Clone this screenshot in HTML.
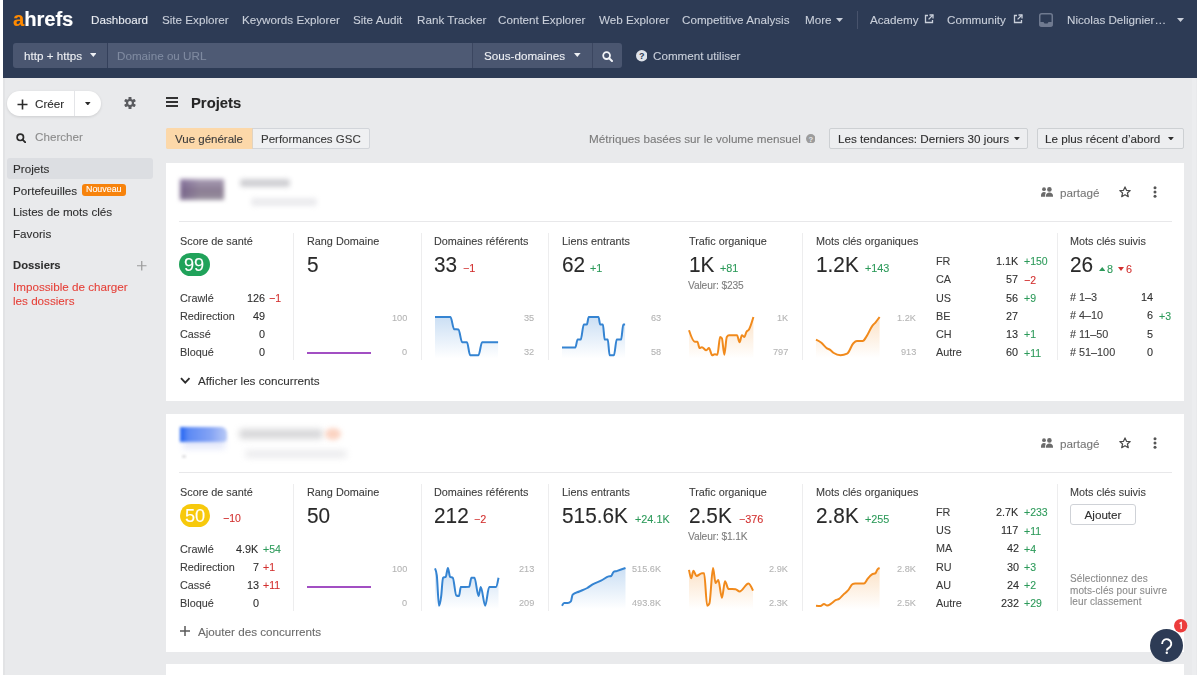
<!DOCTYPE html>
<html><head><meta charset="utf-8"><title>Ahrefs - Projets</title>
<style>
html,body{margin:0;padding:0;}
body{width:1200px;height:675px;overflow:hidden;position:relative;background:#ffffff;font-family:'Liberation Sans', sans-serif;}
.t{position:absolute;white-space:nowrap;will-change:transform;-webkit-text-stroke:0.1px currentColor;}
.r{position:absolute;display:block;}
</style></head><body>
<div class="r" style="left:3.00px;top:0.00px;width:1194.00px;height:675.00px;background:#e9eaec"></div>
<div class="r" style="left:3.00px;top:78.00px;width:2.20px;height:597.00px;background:#e2e3e5"></div>
<div class="r" style="left:1192.00px;top:78.00px;width:4.00px;height:597.00px;background:#ecedef"></div>
<div class="r" style="left:3.00px;top:0.00px;width:1194.00px;height:78.00px;background:#2d3b55"></div>
<div class="t" style="left:12.6px;top:8.81px;font-size:20.3px;line-height:20.3px;font-weight:700;letter-spacing:-0.1px;transform:scaleY(1.0);transform-origin:0 100%;"><span style="color:#ff8a00">a</span><span style="color:#ffffff">hrefs</span></div>
<div class="t" style="left:91.00px;top:14.12px;font-size:11.67px;line-height:11.67px;color:#e9ecf2;">Dashboard</div>
<div class="t" style="left:162.00px;top:14.12px;font-size:11.67px;line-height:11.67px;color:#c9cfda;">Site Explorer</div>
<div class="t" style="left:241.70px;top:14.12px;font-size:11.67px;line-height:11.67px;color:#c9cfda;">Keywords Explorer</div>
<div class="t" style="left:352.50px;top:14.12px;font-size:11.67px;line-height:11.67px;color:#c9cfda;">Site Audit</div>
<div class="t" style="left:416.70px;top:14.12px;font-size:11.67px;line-height:11.67px;color:#c9cfda;">Rank Tracker</div>
<div class="t" style="left:498.00px;top:14.12px;font-size:11.67px;line-height:11.67px;color:#c9cfda;">Content Explorer</div>
<div class="t" style="left:599.00px;top:14.12px;font-size:11.67px;line-height:11.67px;color:#c9cfda;">Web Explorer</div>
<div class="t" style="left:682.00px;top:14.12px;font-size:11.67px;line-height:11.67px;color:#c9cfda;">Competitive Analysis</div>
<div class="t" style="left:804.70px;top:14.12px;font-size:11.67px;line-height:11.67px;color:#c9cfda;">More</div>
<div class="t" style="left:870.00px;top:14.12px;font-size:11.67px;line-height:11.67px;color:#c9cfda;">Academy</div>
<div class="t" style="left:947.00px;top:14.12px;font-size:11.67px;line-height:11.67px;color:#c9cfda;">Community</div>
<div class="t" style="left:1066.70px;top:14.12px;font-size:11.67px;line-height:11.67px;color:#c9cfda;">Nicolas Delignier…</div>
<svg class="r" style="left:836.00px;top:18.00px;" width="7.00" height="4.00" viewBox="0 0 7.00 4.00"><path d="M0 0H7.00L3.50 4.00Z" fill="#c9cfda"/></svg>
<svg class="r" style="left:1176.70px;top:18.00px;" width="7.00" height="4.00" viewBox="0 0 7.00 4.00"><path d="M0 0H7.00L3.50 4.00Z" fill="#c9cfda"/></svg>
<div class="r" style="left:856.50px;top:11.00px;width:1.00px;height:18.00px;background:#48536c"></div>
<svg class="r" style="left:923.50px;top:13.50px;" width="10.00" height="10.00" viewBox="0 0 10.00 10.00"><path d="M4 1.5H1.5V8.5H8.5V6" fill="none" stroke="#c9cfda" stroke-width="1.3"/><path d="M5.5 1H9V4.5" fill="none" stroke="#c9cfda" stroke-width="1.3"/><path d="M9 1L4.6 5.4" stroke="#c9cfda" stroke-width="1.3"/></svg>
<svg class="r" style="left:1012.50px;top:13.50px;" width="10.00" height="10.00" viewBox="0 0 10.00 10.00"><path d="M4 1.5H1.5V8.5H8.5V6" fill="none" stroke="#c9cfda" stroke-width="1.3"/><path d="M5.5 1H9V4.5" fill="none" stroke="#c9cfda" stroke-width="1.3"/><path d="M9 1L4.6 5.4" stroke="#c9cfda" stroke-width="1.3"/></svg>
<svg class="r" style="left:1039.00px;top:13.00px;" width="14.00" height="14.00" viewBox="0 0 14.00 14.00"><rect x="0.75" y="0.75" width="12.5" height="12.5" rx="2" fill="none" stroke="#6f7a90" stroke-width="1.5"/><path d="M0.75 9H4.5L5.5 10.5H8.5L9.5 9H13.25V13.25H0.75Z" fill="#6f7a90"/></svg>
<div class="r" style="left:13.00px;top:43.00px;width:609.00px;height:25.00px;background:#4a5670;border-radius:3px"></div>
<div class="r" style="left:107.00px;top:43.00px;width:365.00px;height:25.00px;background:#4e5a74"></div>
<div class="r" style="left:106.60px;top:43.00px;width:1.60px;height:25.00px;background:#34405b"></div>
<div class="r" style="left:472.00px;top:43.00px;width:1.00px;height:25.00px;background:#3b4660"></div>
<div class="r" style="left:592.00px;top:43.00px;width:1.00px;height:25.00px;background:#3b4660"></div>
<div class="t" style="left:24.00px;top:50.12px;font-size:11.67px;line-height:11.67px;color:#eef0f4;">http + https</div>
<svg class="r" style="left:89.80px;top:53.30px;" width="6.60" height="4.00" viewBox="0 0 6.60 4.00"><path d="M0 0H6.60L3.30 4.00Z" fill="#eef0f4"/></svg>
<div class="t" style="left:117.00px;top:50.12px;font-size:11.67px;line-height:11.67px;color:#7f8aa0;">Domaine ou URL</div>
<div class="t" style="left:483.70px;top:50.12px;font-size:11.67px;line-height:11.67px;color:#eef0f4;">Sous-domaines</div>
<svg class="r" style="left:574.30px;top:53.30px;" width="6.60" height="4.00" viewBox="0 0 6.60 4.00"><path d="M0 0H6.60L3.30 4.00Z" fill="#eef0f4"/></svg>
<svg class="r" style="left:602.00px;top:50.50px;" width="11.00" height="11.00" viewBox="0 0 11.00 11.00"><circle cx="4.6" cy="4.6" r="3.4" fill="none" stroke="#f2f4f7" stroke-width="1.8"/><path d="M7.2 7.2L10 10" stroke="#f2f4f7" stroke-width="2" stroke-linecap="round"/></svg>
<svg class="r" style="left:635.50px;top:50.00px;" width="11.50" height="11.50" viewBox="0 0 11.50 11.50"><circle cx="5.75" cy="5.75" r="5.75" fill="#dfe3ea"/><text x="5.75" y="9.2" text-anchor="middle" font-family="Liberation Sans" font-weight="700" font-size="9" fill="#2d3b55">?</text></svg>
<div class="t" style="left:652.50px;top:50.12px;font-size:11.67px;line-height:11.67px;color:#c9cfda;">Comment utiliser</div>
<div class="r" style="left:6.70px;top:91.00px;width:94.00px;height:25.30px;background:#ffffff;border-radius:13px;box-shadow:0 1px 3px rgba(0,0,0,0.12)"></div>
<div class="r" style="left:73.50px;top:91.00px;width:1.00px;height:25.30px;background:#e4e5e8"></div>
<svg class="r" style="left:16.50px;top:99.00px;" width="11.00" height="11.00" viewBox="0 0 11.00 11.00"><path d="M5.5 0.5V10.5M0.5 5.5H10.5" stroke="#2b2b2b" stroke-width="1.6"/></svg>
<div class="t" style="left:35.00px;top:98.12px;font-size:11.67px;line-height:11.67px;color:#2b2b2b;">Créer</div>
<svg class="r" style="left:85.20px;top:101.80px;" width="5.60" height="3.60" viewBox="0 0 5.60 3.60"><path d="M0 0H5.60L2.80 3.60Z" fill="#2b2b2b"/></svg>
<svg class="r" style="left:123.50px;top:96.80px;" width="12.00" height="12.00" viewBox="0 0 12.00 12.00"><g fill="#5b5c60"><circle cx="6" cy="6" r="4.0"/><rect x="4.5" y="0" width="3" height="3.2" rx="0.6" transform="rotate(0 6 6)"/><rect x="4.5" y="0" width="3" height="3.2" rx="0.6" transform="rotate(60 6 6)"/><rect x="4.5" y="0" width="3" height="3.2" rx="0.6" transform="rotate(120 6 6)"/><rect x="4.5" y="0" width="3" height="3.2" rx="0.6" transform="rotate(180 6 6)"/><rect x="4.5" y="0" width="3" height="3.2" rx="0.6" transform="rotate(240 6 6)"/><rect x="4.5" y="0" width="3" height="3.2" rx="0.6" transform="rotate(300 6 6)"/></g><circle cx="6" cy="6" r="1.9" fill="#e9eaec"/></svg>
<svg class="r" style="left:15.50px;top:132.80px;" width="10.50" height="10.00" viewBox="0 0 10.50 10.00"><circle cx="4.3" cy="4.3" r="3.2" fill="none" stroke="#2b2b2b" stroke-width="1.7"/><path d="M6.8 6.8L9.5 9.5" stroke="#2b2b2b" stroke-width="1.9" stroke-linecap="round"/></svg>
<div class="t" style="left:35.00px;top:131.12px;font-size:11.67px;line-height:11.67px;color:#8a8a8a;">Chercher</div>
<div class="r" style="left:7.00px;top:158.30px;width:145.50px;height:20.70px;background:#dcdee2;border-radius:3px"></div>
<div class="t" style="left:12.90px;top:163.32px;font-size:11.67px;line-height:11.67px;color:#2e2e2e;">Projets</div>
<div class="t" style="left:12.90px;top:184.62px;font-size:11.67px;line-height:11.67px;color:#2e2e2e;">Portefeuilles</div>
<div class="r" style="left:82.00px;top:184.10px;width:43.70px;height:11.70px;background:#f7830c;border-radius:3px"></div>
<div class="t" style="left:85.80px;top:185.36px;font-size:8.90px;line-height:8.90px;color:#ffffff;">Nouveau</div>
<div class="t" style="left:12.90px;top:206.02px;font-size:11.67px;line-height:11.67px;color:#2e2e2e;">Listes de mots clés</div>
<div class="t" style="left:12.90px;top:227.82px;font-size:11.67px;line-height:11.67px;color:#2e2e2e;">Favoris</div>
<div class="t" style="left:12.90px;top:259.66px;font-size:11.27px;line-height:11.27px;color:#2e2e2e;font-weight:700;">Dossiers</div>
<svg class="r" style="left:137.00px;top:261.00px;" width="9.50" height="9.50" viewBox="0 0 9.50 9.50"><path d="M4.75 0V9.5M0 4.75H9.5" stroke="#9a9a9a" stroke-width="1.2"/></svg>
<div class="t" style="left:12.90px;top:281.12px;font-size:11.67px;line-height:11.67px;color:#e5423a;">Impossible de charger</div>
<div class="t" style="left:12.90px;top:295.12px;font-size:11.67px;line-height:11.67px;color:#e5423a;">les dossiers</div>
<svg class="r" style="left:166.00px;top:97.00px;" width="12.00" height="10.00" viewBox="0 0 12.00 10.00"><path d="M0 1H12M0 5H12M0 9H12" stroke="#333" stroke-width="1.8"/></svg>
<div class="t" style="left:191.00px;top:95.67px;font-size:14.80px;line-height:14.80px;color:#262626;font-weight:700;">Projets</div>
<div class="r" style="left:166.00px;top:128.10px;width:203.50px;height:21.40px;background:#eff0f2;border:1px solid #d2d5da;border-radius:2px;box-sizing:border-box"></div>
<div class="r" style="left:166.00px;top:128.10px;width:86.00px;height:21.40px;background:#fcd8a9;border-radius:2px 0 0 2px"></div>
<div class="r" style="left:251.70px;top:128.10px;width:1.00px;height:21.40px;background:#e0d3c2"></div>
<div class="t" style="left:175.20px;top:133.96px;font-size:11.50px;line-height:11.50px;color:#3a3a3a;">Vue générale</div>
<div class="t" style="left:260.50px;top:133.96px;font-size:11.50px;line-height:11.50px;color:#3a3a3a;">Performances GSC</div>
<div class="t" style="left:588.75px;top:133.12px;font-size:11.67px;line-height:11.67px;color:#7a7a7a;">Métriques basées sur le volume mensuel</div>
<svg class="r" style="left:805.50px;top:133.50px;" width="9.60" height="9.60" viewBox="0 0 9.60 9.60"><circle cx="4.8" cy="4.8" r="4.8" fill="#9c9c9c"/><text x="4.8" y="7.8" text-anchor="middle" font-family="Liberation Sans" font-weight="700" font-size="7.6" fill="#e9eaec">?</text></svg>
<div class="r" style="left:828.70px;top:128.20px;width:199.80px;height:21.00px;background:#edeef0;border:1px solid #cdd0d3;border-radius:2px;box-sizing:border-box"></div>
<div class="t" style="left:838.00px;top:133.12px;font-size:11.67px;line-height:11.67px;color:#2e2e2e;">Les tendances: Derniers 30 jours</div>
<svg class="r" style="left:1013.90px;top:136.70px;" width="5.80" height="3.60" viewBox="0 0 5.80 3.60"><path d="M0 0H5.80L2.90 3.60Z" fill="#2e2e2e"/></svg>
<div class="r" style="left:1036.50px;top:128.20px;width:147.00px;height:21.00px;background:#edeef0;border:1px solid #cdd0d3;border-radius:2px;box-sizing:border-box"></div>
<div class="t" style="left:1045.30px;top:133.12px;font-size:11.67px;line-height:11.67px;color:#2e2e2e;">Le plus récent d’abord</div>
<svg class="r" style="left:1167.80px;top:136.70px;" width="5.80" height="3.60" viewBox="0 0 5.80 3.60"><path d="M0 0H5.80L2.90 3.60Z" fill="#2e2e2e"/></svg>
<div class="r" style="left:166.00px;top:163.00px;width:1017.50px;height:237.50px;background:#ffffff"></div>
<div class="r" style="left:179.50px;top:179.00px;width:44.00px;height:21.00px;background:linear-gradient(90deg,rgba(80,50,120,0.35),rgba(80,50,120,0) 45%),linear-gradient(180deg,#a99db5 0%,#8b7d93 55%,#9a92a0 100%);filter:blur(2px)"></div>
<div class="r" style="left:240.00px;top:178.50px;width:50.00px;height:8.00px;background:#cfcfd3;border-radius:3px;filter:blur(2.6px)"></div>
<div class="r" style="left:251.00px;top:198.00px;width:66.00px;height:7.50px;background:#ebebee;border-radius:3px;filter:blur(2.6px)"></div>
<svg class="r" style="left:1041.00px;top:187.30px;" width="12.50" height="10.00" viewBox="0 0 12.50 10.00"><g fill="#6b6b6b"><circle cx="3" cy="2.2" r="1.9"/><circle cx="8.4" cy="2.4" r="2.3"/><path d="M0 8.5C0 6.2 1.2 5 3 5C3.9 5 4.5 5.3 4.9 5.8C4.3 6.6 4.1 7.6 4.1 8.6V9.8H0Z"/><path d="M4.9 9.8V8.8C4.9 6.7 6.3 5.4 8.4 5.4C10.6 5.4 12 6.7 12 8.8V9.8Z"/></g></svg>
<div class="t" style="left:1059.60px;top:186.72px;font-size:11.67px;line-height:11.67px;color:#777777;">partagé</div>
<svg class="r" style="left:1118.50px;top:186.20px;" width="12.00" height="12.00" viewBox="0 0 12.00 12.00"><path d="M6 0.9L7.5 4.3L11.2 4.6L8.4 7L9.3 10.7L6 8.7L2.7 10.7L3.6 7L0.8 4.6L4.5 4.3Z" fill="none" stroke="#4a4a4a" stroke-width="1.2" stroke-linejoin="round"/></svg>
<svg class="r" style="left:1153.30px;top:186.30px;" width="4.00" height="12.00" viewBox="0 0 4.00 12.00"><g fill="#555"><circle cx="2" cy="1.7" r="1.5"/><circle cx="2" cy="6" r="1.5"/><circle cx="2" cy="10.3" r="1.5"/></g></svg>
<div class="r" style="left:178.70px;top:221.00px;width:993.30px;height:1.00px;background:#e8e8ea"></div>
<div class="r" style="left:293.40px;top:233.00px;width:1.00px;height:126.50px;background:#ededee"></div>
<div class="r" style="left:421.00px;top:233.00px;width:1.00px;height:126.50px;background:#ededee"></div>
<div class="r" style="left:547.60px;top:233.00px;width:1.00px;height:126.50px;background:#ededee"></div>
<div class="r" style="left:802.00px;top:233.00px;width:1.00px;height:126.50px;background:#ededee"></div>
<div class="r" style="left:1056.50px;top:233.00px;width:1.00px;height:126.50px;background:#ededee"></div>
<div class="t" style="left:179.50px;top:235.93px;font-size:10.83px;line-height:10.83px;color:#3c3c3c;">Score de santé</div>
<div class="r" style="left:179.30px;top:253.00px;width:31.00px;height:22.80px;background:#20a25a;border-radius:11.4px"></div>
<div class="t" style="left:193.90px;transform:translateX(-50%);top:255.69px;font-size:18.20px;line-height:18.20px;color:#ffffff;">99</div>
<div class="t" style="left:179.50px;top:292.83px;font-size:10.83px;line-height:10.83px;color:#3c3c3c;">Crawlé</div>
<div class="t" style="right:935.20px;top:292.83px;font-size:10.83px;line-height:10.83px;color:#2e2e2e;">126</div>
<div class="t" style="left:268.80px;top:293.11px;font-size:10.50px;line-height:10.50px;color:#d2302f;">−1</div>
<div class="t" style="left:179.50px;top:310.98px;font-size:10.83px;line-height:10.83px;color:#3c3c3c;">Redirection</div>
<div class="t" style="right:935.20px;top:310.98px;font-size:10.83px;line-height:10.83px;color:#2e2e2e;">49</div>
<div class="t" style="left:179.50px;top:329.13px;font-size:10.83px;line-height:10.83px;color:#3c3c3c;">Cassé</div>
<div class="t" style="right:935.20px;top:329.13px;font-size:10.83px;line-height:10.83px;color:#2e2e2e;">0</div>
<div class="t" style="left:179.50px;top:347.28px;font-size:10.83px;line-height:10.83px;color:#3c3c3c;">Bloqué</div>
<div class="t" style="right:935.20px;top:347.28px;font-size:10.83px;line-height:10.83px;color:#2e2e2e;">0</div>
<div class="t" style="left:306.70px;top:235.93px;font-size:10.83px;line-height:10.83px;color:#3c3c3c;">Rang Domaine</div>
<div class="t" style="left:306.70px;top:254.99px;font-size:20.80px;line-height:20.80px;color:#2a2a2a;transform:scaleY(1.06);transform-origin:0 85%">5</div>
<div class="r" style="left:307.10px;top:352.00px;width:64.10px;height:2.00px;background:#a24fc3"></div>
<div class="t" style="right:793.10px;top:313.74px;font-size:9.17px;line-height:9.17px;color:#b4b4b4;">100</div>
<div class="t" style="right:793.10px;top:348.04px;font-size:9.17px;line-height:9.17px;color:#b4b4b4;">0</div>
<div class="t" style="left:434.00px;top:235.93px;font-size:10.83px;line-height:10.83px;color:#3c3c3c;">Domaines référents</div>
<div class="t" style="left:434.00px;top:254.99px;font-size:20.80px;line-height:20.80px;color:#2a2a2a;transform:scaleY(1.06);transform-origin:0 85%">33</div>
<div class="t" style="left:463.30px;top:263.23px;font-size:10.83px;line-height:10.83px;color:#d2302f;">−1</div>
<svg class="r" style="left:432.90px;top:314.60px;" width="67.10" height="43.40" viewBox="0 0 67.10 43.40"><defs><linearGradient id="g104" x1="0" y1="0" x2="0" y2="1"><stop offset="0" stop-color="rgb(47,127,211)" stop-opacity="0.25"/><stop offset="1" stop-color="rgb(47,127,211)" stop-opacity="0"/></linearGradient></defs><path d="M2.00 2.00 C7.17 2.00 12.33 2.00 17.50 2.00 C18.70 2.00 19.90 14.09 21.10 14.20 C22.57 14.33 24.03 14.27 25.50 14.40 C26.70 14.51 27.90 27.30 29.10 27.30 C30.73 27.30 32.37 27.30 34.00 27.30 C35.03 27.30 36.07 40.20 37.10 40.20 C39.90 40.20 42.70 40.20 45.50 40.20 C46.70 40.20 47.90 27.30 49.10 27.30 C54.43 27.30 59.77 27.30 65.10 27.30 L65.10 43.40 L2.00 43.40 Z" fill="url(#g104)"/><path d="M2.00 2.00 C7.17 2.00 12.33 2.00 17.50 2.00 C18.70 2.00 19.90 14.09 21.10 14.20 C22.57 14.33 24.03 14.27 25.50 14.40 C26.70 14.51 27.90 27.30 29.10 27.30 C30.73 27.30 32.37 27.30 34.00 27.30 C35.03 27.30 36.07 40.20 37.10 40.20 C39.90 40.20 42.70 40.20 45.50 40.20 C46.70 40.20 47.90 27.30 49.10 27.30 C54.43 27.30 59.77 27.30 65.10 27.30" fill="none" stroke="#3584d2" stroke-width="2.00" stroke-linejoin="round" stroke-linecap="butt"/></svg>
<div class="t" style="right:666.10px;top:313.74px;font-size:9.17px;line-height:9.17px;color:#b4b4b4;">35</div>
<div class="t" style="right:666.10px;top:348.04px;font-size:9.17px;line-height:9.17px;color:#b4b4b4;">32</div>
<div class="t" style="left:561.50px;top:235.93px;font-size:10.83px;line-height:10.83px;color:#3c3c3c;">Liens entrants</div>
<div class="t" style="left:561.50px;top:254.99px;font-size:20.80px;line-height:20.80px;color:#2a2a2a;transform:scaleY(1.06);transform-origin:0 85%">62</div>
<div class="t" style="left:590.30px;top:263.23px;font-size:10.83px;line-height:10.83px;color:#2d9a5a;">+1</div>
<svg class="r" style="left:560.10px;top:314.60px;" width="67.10" height="43.40" viewBox="0 0 67.10 43.40"><defs><linearGradient id="g110" x1="0" y1="0" x2="0" y2="1"><stop offset="0" stop-color="rgb(47,127,211)" stop-opacity="0.25"/><stop offset="1" stop-color="rgb(47,127,211)" stop-opacity="0"/></linearGradient></defs><path d="M2.00 32.60 C6.43 32.60 10.87 32.60 15.30 32.60 C16.07 32.60 16.83 24.60 17.60 24.60 C18.63 24.60 19.67 24.60 20.70 24.60 C21.73 24.60 22.77 9.50 23.80 9.50 C24.83 9.50 25.87 9.50 26.90 9.50 C27.50 9.50 28.10 2.00 28.70 2.00 C31.97 2.00 35.23 2.00 38.50 2.00 C39.07 2.00 39.63 9.50 40.20 9.50 C41.10 9.50 42.00 9.50 42.90 9.50 C43.50 9.50 44.10 24.60 44.70 24.60 C45.73 24.60 46.77 24.60 47.80 24.60 C48.40 24.60 49.00 40.20 49.60 40.20 C51.07 40.20 52.53 40.20 54.00 40.20 C54.90 40.20 55.80 24.60 56.70 24.60 C58.17 24.60 59.63 24.60 61.10 24.60 C61.83 24.60 62.57 9.50 63.30 9.50 C63.90 9.50 64.50 9.50 65.10 9.50 L65.10 43.40 L2.00 43.40 Z" fill="url(#g110)"/><path d="M2.00 32.60 C6.43 32.60 10.87 32.60 15.30 32.60 C16.07 32.60 16.83 24.60 17.60 24.60 C18.63 24.60 19.67 24.60 20.70 24.60 C21.73 24.60 22.77 9.50 23.80 9.50 C24.83 9.50 25.87 9.50 26.90 9.50 C27.50 9.50 28.10 2.00 28.70 2.00 C31.97 2.00 35.23 2.00 38.50 2.00 C39.07 2.00 39.63 9.50 40.20 9.50 C41.10 9.50 42.00 9.50 42.90 9.50 C43.50 9.50 44.10 24.60 44.70 24.60 C45.73 24.60 46.77 24.60 47.80 24.60 C48.40 24.60 49.00 40.20 49.60 40.20 C51.07 40.20 52.53 40.20 54.00 40.20 C54.90 40.20 55.80 24.60 56.70 24.60 C58.17 24.60 59.63 24.60 61.10 24.60 C61.83 24.60 62.57 9.50 63.30 9.50 C63.90 9.50 64.50 9.50 65.10 9.50" fill="none" stroke="#3584d2" stroke-width="2.00" stroke-linejoin="round" stroke-linecap="butt"/></svg>
<div class="t" style="right:539.00px;top:313.74px;font-size:9.17px;line-height:9.17px;color:#b4b4b4;">63</div>
<div class="t" style="right:539.00px;top:348.04px;font-size:9.17px;line-height:9.17px;color:#b4b4b4;">58</div>
<div class="t" style="left:688.70px;top:235.93px;font-size:10.83px;line-height:10.83px;color:#3c3c3c;">Trafic organique</div>
<div class="t" style="left:688.70px;top:254.99px;font-size:20.80px;line-height:20.80px;color:#2a2a2a;transform:scaleY(1.06);transform-origin:0 85%">1K</div>
<div class="t" style="left:719.80px;top:263.23px;font-size:10.83px;line-height:10.83px;color:#2d9a5a;">+81</div>
<div class="t" style="left:688.30px;top:281.16px;font-size:10.20px;line-height:10.20px;color:#7d7d7d;letter-spacing:-0.12px">Valeur: $235</div>
<svg class="r" style="left:686.80px;top:314.60px;" width="68.40" height="43.40" viewBox="0 0 68.40 43.40"><defs><linearGradient id="g117" x1="0" y1="0" x2="0" y2="1"><stop offset="0" stop-color="rgb(241,138,28)" stop-opacity="0.25"/><stop offset="1" stop-color="rgb(241,138,28)" stop-opacity="0"/></linearGradient></defs><path d="M2.00 15.30 C3.93 21.05 5.87 26.80 7.80 26.80 C8.67 26.80 9.53 26.80 10.40 26.80 C11.13 26.80 11.87 33.10 12.60 33.10 C13.37 33.10 14.13 32.20 14.90 32.20 C16.37 32.20 17.83 35.30 19.30 35.30 C20.20 35.30 21.10 33.10 22.00 33.10 C23.03 33.10 24.07 40.20 25.10 40.20 C26.00 40.20 26.90 39.30 27.80 39.30 C28.67 39.30 29.53 39.70 30.40 39.70 C31.30 39.70 32.20 22.00 33.10 22.00 C33.70 22.00 34.30 22.43 34.90 23.30 C35.70 24.46 36.50 39.70 37.30 39.70 C38.13 39.70 38.97 23.36 39.80 22.00 C40.53 20.80 41.27 20.20 42.00 20.20 C44.67 20.20 47.33 20.20 50.00 20.20 C50.87 20.20 51.73 27.30 52.60 27.30 C53.37 27.30 54.13 20.20 54.90 20.20 C55.77 20.20 56.63 22.00 57.50 22.00 C58.10 22.00 58.70 18.30 59.30 17.10 C60.20 15.30 61.10 15.92 62.00 14.40 C63.47 11.92 64.93 6.96 66.40 2.00 L66.40 43.40 L2.00 43.40 Z" fill="url(#g117)"/><path d="M2.00 15.30 C3.93 21.05 5.87 26.80 7.80 26.80 C8.67 26.80 9.53 26.80 10.40 26.80 C11.13 26.80 11.87 33.10 12.60 33.10 C13.37 33.10 14.13 32.20 14.90 32.20 C16.37 32.20 17.83 35.30 19.30 35.30 C20.20 35.30 21.10 33.10 22.00 33.10 C23.03 33.10 24.07 40.20 25.10 40.20 C26.00 40.20 26.90 39.30 27.80 39.30 C28.67 39.30 29.53 39.70 30.40 39.70 C31.30 39.70 32.20 22.00 33.10 22.00 C33.70 22.00 34.30 22.43 34.90 23.30 C35.70 24.46 36.50 39.70 37.30 39.70 C38.13 39.70 38.97 23.36 39.80 22.00 C40.53 20.80 41.27 20.20 42.00 20.20 C44.67 20.20 47.33 20.20 50.00 20.20 C50.87 20.20 51.73 27.30 52.60 27.30 C53.37 27.30 54.13 20.20 54.90 20.20 C55.77 20.20 56.63 22.00 57.50 22.00 C58.10 22.00 58.70 18.30 59.30 17.10 C60.20 15.30 61.10 15.92 62.00 14.40 C63.47 11.92 64.93 6.96 66.40 2.00" fill="none" stroke="#f18a1c" stroke-width="2.00" stroke-linejoin="round" stroke-linecap="butt"/></svg>
<div class="t" style="right:412.00px;top:313.74px;font-size:9.17px;line-height:9.17px;color:#b4b4b4;">1K</div>
<div class="t" style="right:412.00px;top:348.04px;font-size:9.17px;line-height:9.17px;color:#b4b4b4;">797</div>
<div class="t" style="left:816.00px;top:235.93px;font-size:10.83px;line-height:10.83px;color:#3c3c3c;">Mots clés organiques</div>
<div class="t" style="left:816.00px;top:254.99px;font-size:20.80px;line-height:20.80px;color:#2a2a2a;transform:scaleY(1.06);transform-origin:0 85%">1.2K</div>
<div class="t" style="left:865.00px;top:263.23px;font-size:10.83px;line-height:10.83px;color:#2d9a5a;">+143</div>
<svg class="r" style="left:814.20px;top:315.00px;" width="67.60" height="43.00" viewBox="0 0 67.60 43.00"><defs><linearGradient id="g123" x1="0" y1="0" x2="0" y2="1"><stop offset="0" stop-color="rgb(241,138,28)" stop-opacity="0.25"/><stop offset="1" stop-color="rgb(241,138,28)" stop-opacity="0"/></linearGradient></defs><path d="M2.00 24.70 C3.80 25.54 5.60 26.38 7.40 27.80 C9.17 29.19 10.93 31.85 12.70 33.10 C13.87 33.93 15.03 34.10 16.20 34.90 C17.40 35.72 18.60 37.21 19.80 38.00 C22.03 39.47 24.27 40.20 26.50 40.20 C28.70 40.20 30.90 39.70 33.10 38.70 C35.20 37.75 37.30 30.30 39.40 28.20 C40.57 27.03 41.73 26.00 42.90 26.00 C44.83 26.00 46.77 26.00 48.70 26.00 C50.03 26.00 51.37 23.09 52.70 21.10 C54.47 18.46 56.23 13.79 58.00 11.30 C59.20 9.61 60.40 8.75 61.60 7.30 C62.93 5.68 64.27 3.84 65.60 2.00 L65.60 43.00 L2.00 43.00 Z" fill="url(#g123)"/><path d="M2.00 24.70 C3.80 25.54 5.60 26.38 7.40 27.80 C9.17 29.19 10.93 31.85 12.70 33.10 C13.87 33.93 15.03 34.10 16.20 34.90 C17.40 35.72 18.60 37.21 19.80 38.00 C22.03 39.47 24.27 40.20 26.50 40.20 C28.70 40.20 30.90 39.70 33.10 38.70 C35.20 37.75 37.30 30.30 39.40 28.20 C40.57 27.03 41.73 26.00 42.90 26.00 C44.83 26.00 46.77 26.00 48.70 26.00 C50.03 26.00 51.37 23.09 52.70 21.10 C54.47 18.46 56.23 13.79 58.00 11.30 C59.20 9.61 60.40 8.75 61.60 7.30 C62.93 5.68 64.27 3.84 65.60 2.00" fill="none" stroke="#f18a1c" stroke-width="2.00" stroke-linejoin="round" stroke-linecap="butt"/></svg>
<div class="t" style="right:284.10px;top:313.74px;font-size:9.17px;line-height:9.17px;color:#b4b4b4;">1.2K</div>
<div class="t" style="right:284.10px;top:348.04px;font-size:9.17px;line-height:9.17px;color:#b4b4b4;">913</div>
<div class="t" style="left:936.00px;top:256.03px;font-size:10.83px;line-height:10.83px;color:#3c3c3c;">FR</div>
<div class="t" style="right:181.60px;top:256.03px;font-size:10.83px;line-height:10.83px;color:#2e2e2e;">1.1K</div>
<div class="t" style="left:1023.90px;top:256.31px;font-size:10.50px;line-height:10.50px;color:#2d9a5a;">+150</div>
<div class="t" style="left:936.00px;top:274.31px;font-size:10.83px;line-height:10.83px;color:#3c3c3c;">CA</div>
<div class="t" style="right:181.60px;top:274.31px;font-size:10.83px;line-height:10.83px;color:#2e2e2e;">57</div>
<div class="t" style="left:1023.90px;top:274.59px;font-size:10.50px;line-height:10.50px;color:#d2302f;">−2</div>
<div class="t" style="left:936.00px;top:292.59px;font-size:10.83px;line-height:10.83px;color:#3c3c3c;">US</div>
<div class="t" style="right:181.60px;top:292.59px;font-size:10.83px;line-height:10.83px;color:#2e2e2e;">56</div>
<div class="t" style="left:1023.90px;top:292.87px;font-size:10.50px;line-height:10.50px;color:#2d9a5a;">+9</div>
<div class="t" style="left:936.00px;top:310.87px;font-size:10.83px;line-height:10.83px;color:#3c3c3c;">BE</div>
<div class="t" style="right:181.60px;top:310.87px;font-size:10.83px;line-height:10.83px;color:#2e2e2e;">27</div>
<div class="t" style="left:936.00px;top:329.15px;font-size:10.83px;line-height:10.83px;color:#3c3c3c;">CH</div>
<div class="t" style="right:181.60px;top:329.15px;font-size:10.83px;line-height:10.83px;color:#2e2e2e;">13</div>
<div class="t" style="left:1023.90px;top:329.43px;font-size:10.50px;line-height:10.50px;color:#2d9a5a;">+1</div>
<div class="t" style="left:936.00px;top:347.43px;font-size:10.83px;line-height:10.83px;color:#3c3c3c;">Autre</div>
<div class="t" style="right:181.60px;top:347.43px;font-size:10.83px;line-height:10.83px;color:#2e2e2e;">60</div>
<div class="t" style="left:1023.90px;top:347.71px;font-size:10.50px;line-height:10.50px;color:#2d9a5a;">+11</div>
<div class="t" style="left:1070.00px;top:235.93px;font-size:10.83px;line-height:10.83px;color:#3c3c3c;">Mots clés suivis</div>
<div class="t" style="left:1070.00px;top:254.99px;font-size:20.80px;line-height:20.80px;color:#2a2a2a;transform:scaleY(1.06);transform-origin:0 85%">26</div>
<svg class="r" style="left:1098.90px;top:266.60px;" width="6.50" height="4.00" viewBox="0 0 6.50 4.00"><path d="M0 4H6.5L3.25 0Z" fill="#2d9a5a"/></svg>
<div class="t" style="left:1106.50px;top:263.83px;font-size:10.83px;line-height:10.83px;color:#2d9a5a;">8</div>
<svg class="r" style="left:1118.40px;top:266.80px;" width="6.00" height="4.00" viewBox="0 0 6.00 4.00"><path d="M0 0H6L3 4Z" fill="#d2302f"/></svg>
<div class="t" style="left:1125.80px;top:263.83px;font-size:10.83px;line-height:10.83px;color:#d2302f;">6</div>
<div class="t" style="left:1070.00px;top:292.23px;font-size:10.83px;line-height:10.83px;color:#3c3c3c;"># 1–3</div>
<div class="t" style="right:46.90px;top:292.23px;font-size:10.83px;line-height:10.83px;color:#2e2e2e;">14</div>
<div class="t" style="left:1070.00px;top:310.46px;font-size:10.83px;line-height:10.83px;color:#3c3c3c;"># 4–10</div>
<div class="t" style="right:46.90px;top:310.46px;font-size:10.83px;line-height:10.83px;color:#2e2e2e;">6</div>
<div class="t" style="left:1158.80px;top:310.74px;font-size:10.50px;line-height:10.50px;color:#2d9a5a;">+3</div>
<div class="t" style="left:1070.00px;top:328.69px;font-size:10.83px;line-height:10.83px;color:#3c3c3c;"># 11–50</div>
<div class="t" style="right:46.90px;top:328.69px;font-size:10.83px;line-height:10.83px;color:#2e2e2e;">5</div>
<div class="t" style="left:1070.00px;top:346.92px;font-size:10.83px;line-height:10.83px;color:#3c3c3c;"># 51–100</div>
<div class="t" style="right:46.90px;top:346.92px;font-size:10.83px;line-height:10.83px;color:#2e2e2e;">0</div>
<svg class="r" style="left:180.00px;top:376.50px;" width="10.50" height="7.50" viewBox="0 0 10.50 7.50"><path d="M1 1.2L5.25 5.6L9.5 1.2" fill="none" stroke="#2b2b2b" stroke-width="1.8"/></svg>
<div class="t" style="left:197.80px;top:374.52px;font-size:11.67px;line-height:11.67px;color:#333333;">Afficher les concurrents</div>
<div class="r" style="left:166.00px;top:414.00px;width:1017.50px;height:237.50px;background:#ffffff"></div>
<div class="r" style="left:183.00px;top:436.00px;width:42.00px;height:13.00px;background:#e6eafb;filter:blur(3px)"></div>
<div class="r" style="left:179.50px;top:427.00px;width:47.00px;height:14.50px;background:linear-gradient(90deg,#1f62f2 0%,#5d8af4 18%,#84a3f4 65%,#b8c9f6 100%);border-radius:0 6px 4px 0;filter:blur(1.6px)"></div>
<div class="r" style="left:182.00px;top:455.00px;width:4.00px;height:3.00px;background:#e2e2e4;filter:blur(1px)"></div>
<div class="r" style="left:238.50px;top:429.00px;width:84.00px;height:10.00px;background:#d8d8da;border-radius:4px;filter:blur(3px)"></div>
<div class="r" style="left:325.00px;top:428.00px;width:16.00px;height:12.00px;background:#fbd3c2;border-radius:50%;filter:blur(2.8px)"></div>
<div class="r" style="left:245.00px;top:449.50px;width:102.00px;height:8.50px;background:#ececee;border-radius:4px;filter:blur(3px)"></div>
<svg class="r" style="left:1041.00px;top:438.30px;" width="12.50" height="10.00" viewBox="0 0 12.50 10.00"><g fill="#6b6b6b"><circle cx="3" cy="2.2" r="1.9"/><circle cx="8.4" cy="2.4" r="2.3"/><path d="M0 8.5C0 6.2 1.2 5 3 5C3.9 5 4.5 5.3 4.9 5.8C4.3 6.6 4.1 7.6 4.1 8.6V9.8H0Z"/><path d="M4.9 9.8V8.8C4.9 6.7 6.3 5.4 8.4 5.4C10.6 5.4 12 6.7 12 8.8V9.8Z"/></g></svg>
<div class="t" style="left:1059.60px;top:437.72px;font-size:11.67px;line-height:11.67px;color:#777777;">partagé</div>
<svg class="r" style="left:1118.50px;top:437.20px;" width="12.00" height="12.00" viewBox="0 0 12.00 12.00"><path d="M6 0.9L7.5 4.3L11.2 4.6L8.4 7L9.3 10.7L6 8.7L2.7 10.7L3.6 7L0.8 4.6L4.5 4.3Z" fill="none" stroke="#4a4a4a" stroke-width="1.2" stroke-linejoin="round"/></svg>
<svg class="r" style="left:1153.30px;top:437.30px;" width="4.00" height="12.00" viewBox="0 0 4.00 12.00"><g fill="#555"><circle cx="2" cy="1.7" r="1.5"/><circle cx="2" cy="6" r="1.5"/><circle cx="2" cy="10.3" r="1.5"/></g></svg>
<div class="r" style="left:178.70px;top:472.00px;width:993.30px;height:1.00px;background:#e8e8ea"></div>
<div class="r" style="left:293.40px;top:484.00px;width:1.00px;height:126.50px;background:#ededee"></div>
<div class="r" style="left:421.00px;top:484.00px;width:1.00px;height:126.50px;background:#ededee"></div>
<div class="r" style="left:547.60px;top:484.00px;width:1.00px;height:126.50px;background:#ededee"></div>
<div class="r" style="left:802.00px;top:484.00px;width:1.00px;height:126.50px;background:#ededee"></div>
<div class="r" style="left:1056.50px;top:484.00px;width:1.00px;height:126.50px;background:#ededee"></div>
<div class="t" style="left:179.50px;top:486.93px;font-size:10.83px;line-height:10.83px;color:#3c3c3c;">Score de santé</div>
<div class="r" style="left:179.70px;top:504.10px;width:30.40px;height:22.70px;background:#f7c90c;border-radius:11.4px"></div>
<div class="t" style="left:194.60px;transform:translateX(-50%);top:506.99px;font-size:18.20px;line-height:18.20px;color:#ffffff;">50</div>
<div class="t" style="left:223.40px;top:513.01px;font-size:10.50px;line-height:10.50px;color:#d2302f;">−10</div>
<div class="t" style="left:179.50px;top:543.83px;font-size:10.83px;line-height:10.83px;color:#3c3c3c;">Crawlé</div>
<div class="t" style="right:941.30px;top:543.83px;font-size:10.83px;line-height:10.83px;color:#2e2e2e;">4.9K</div>
<div class="t" style="left:262.70px;top:544.11px;font-size:10.50px;line-height:10.50px;color:#2d9a5a;">+54</div>
<div class="t" style="left:179.50px;top:561.98px;font-size:10.83px;line-height:10.83px;color:#3c3c3c;">Redirection</div>
<div class="t" style="right:941.30px;top:561.98px;font-size:10.83px;line-height:10.83px;color:#2e2e2e;">7</div>
<div class="t" style="left:262.70px;top:562.26px;font-size:10.50px;line-height:10.50px;color:#d2302f;">+1</div>
<div class="t" style="left:179.50px;top:580.13px;font-size:10.83px;line-height:10.83px;color:#3c3c3c;">Cassé</div>
<div class="t" style="right:941.30px;top:580.13px;font-size:10.83px;line-height:10.83px;color:#2e2e2e;">13</div>
<div class="t" style="left:262.70px;top:580.41px;font-size:10.50px;line-height:10.50px;color:#d2302f;">+11</div>
<div class="t" style="left:179.50px;top:598.28px;font-size:10.83px;line-height:10.83px;color:#3c3c3c;">Bloqué</div>
<div class="t" style="right:941.30px;top:598.28px;font-size:10.83px;line-height:10.83px;color:#2e2e2e;">0</div>
<div class="t" style="left:306.70px;top:486.93px;font-size:10.83px;line-height:10.83px;color:#3c3c3c;">Rang Domaine</div>
<div class="t" style="left:306.70px;top:505.99px;font-size:20.80px;line-height:20.80px;color:#2a2a2a;transform:scaleY(1.06);transform-origin:0 85%">50</div>
<div class="r" style="left:307.10px;top:585.90px;width:64.10px;height:2.00px;background:#a24fc3"></div>
<div class="t" style="right:793.10px;top:564.74px;font-size:9.17px;line-height:9.17px;color:#b4b4b4;">100</div>
<div class="t" style="right:793.10px;top:599.04px;font-size:9.17px;line-height:9.17px;color:#b4b4b4;">0</div>
<div class="t" style="left:434.00px;top:486.93px;font-size:10.83px;line-height:10.83px;color:#3c3c3c;">Domaines référents</div>
<div class="t" style="left:434.00px;top:505.99px;font-size:20.80px;line-height:20.80px;color:#2a2a2a;transform:scaleY(1.06);transform-origin:0 85%">212</div>
<div class="t" style="left:474.30px;top:514.23px;font-size:10.83px;line-height:10.83px;color:#d2302f;">−2</div>
<svg class="r" style="left:432.90px;top:565.90px;" width="67.50" height="43.10" viewBox="0 0 67.50 43.10"><defs><linearGradient id="g200" x1="0" y1="0" x2="0" y2="1"><stop offset="0" stop-color="rgb(47,127,211)" stop-opacity="0.25"/><stop offset="1" stop-color="rgb(47,127,211)" stop-opacity="0"/></linearGradient></defs><path d="M2.00 2.40 C2.60 3.58 3.20 4.77 3.80 9.50 C4.53 15.29 5.27 39.80 6.00 39.80 C6.73 39.80 7.47 35.55 8.20 30.00 C8.80 25.46 9.40 12.20 10.00 11.80 C10.90 11.20 11.80 11.50 12.70 10.90 C13.43 10.41 14.17 2.00 14.90 2.00 C15.63 2.00 16.37 10.41 17.10 10.90 C18.00 11.50 18.90 11.20 19.80 11.80 C20.97 12.58 22.13 29.07 23.30 29.50 C24.20 29.83 25.10 30.00 26.00 30.00 C26.60 30.00 27.20 21.16 27.80 21.10 C30.60 20.83 33.40 20.97 36.20 20.70 C36.93 20.63 37.67 11.80 38.40 11.80 C39.43 11.80 40.47 11.80 41.50 11.80 C42.83 11.80 44.17 30.00 45.50 30.00 C46.27 30.00 47.03 21.10 47.80 21.10 C49.27 21.10 50.73 39.80 52.20 39.80 C53.53 39.80 54.87 21.10 56.20 21.10 C58.43 21.10 60.67 21.10 62.90 21.10 C63.77 21.10 64.63 16.45 65.50 11.80 L65.50 43.10 L2.00 43.10 Z" fill="url(#g200)"/><path d="M2.00 2.40 C2.60 3.58 3.20 4.77 3.80 9.50 C4.53 15.29 5.27 39.80 6.00 39.80 C6.73 39.80 7.47 35.55 8.20 30.00 C8.80 25.46 9.40 12.20 10.00 11.80 C10.90 11.20 11.80 11.50 12.70 10.90 C13.43 10.41 14.17 2.00 14.90 2.00 C15.63 2.00 16.37 10.41 17.10 10.90 C18.00 11.50 18.90 11.20 19.80 11.80 C20.97 12.58 22.13 29.07 23.30 29.50 C24.20 29.83 25.10 30.00 26.00 30.00 C26.60 30.00 27.20 21.16 27.80 21.10 C30.60 20.83 33.40 20.97 36.20 20.70 C36.93 20.63 37.67 11.80 38.40 11.80 C39.43 11.80 40.47 11.80 41.50 11.80 C42.83 11.80 44.17 30.00 45.50 30.00 C46.27 30.00 47.03 21.10 47.80 21.10 C49.27 21.10 50.73 39.80 52.20 39.80 C53.53 39.80 54.87 21.10 56.20 21.10 C58.43 21.10 60.67 21.10 62.90 21.10 C63.77 21.10 64.63 16.45 65.50 11.80" fill="none" stroke="#3584d2" stroke-width="2.00" stroke-linejoin="round" stroke-linecap="butt"/></svg>
<div class="t" style="right:666.10px;top:564.74px;font-size:9.17px;line-height:9.17px;color:#b4b4b4;">213</div>
<div class="t" style="right:666.10px;top:599.04px;font-size:9.17px;line-height:9.17px;color:#b4b4b4;">209</div>
<div class="t" style="left:561.50px;top:486.93px;font-size:10.83px;line-height:10.83px;color:#3c3c3c;">Liens entrants</div>
<div class="t" style="left:561.50px;top:505.99px;font-size:20.80px;line-height:20.80px;color:#2a2a2a;transform:scaleY(1.06);transform-origin:0 85%">515.6K</div>
<div class="t" style="left:634.70px;top:514.23px;font-size:10.83px;line-height:10.83px;color:#2d9a5a;">+24.1K</div>
<svg class="r" style="left:559.70px;top:565.90px;" width="67.50" height="43.10" viewBox="0 0 67.50 43.10"><defs><linearGradient id="g206" x1="0" y1="0" x2="0" y2="1"><stop offset="0" stop-color="rgb(47,127,211)" stop-opacity="0.25"/><stop offset="1" stop-color="rgb(47,127,211)" stop-opacity="0"/></linearGradient></defs><path d="M2.00 39.80 C2.73 38.45 3.47 37.10 4.20 37.10 C5.37 37.10 6.53 37.10 7.70 37.10 C8.77 37.10 9.83 36.50 10.90 35.30 C11.47 34.66 12.03 29.24 12.60 28.70 C14.83 26.57 17.07 26.53 19.30 25.50 C21.97 24.28 24.63 23.55 27.30 22.00 C29.07 20.97 30.83 19.45 32.60 18.40 C35.57 16.64 38.53 15.92 41.50 14.40 C43.87 13.19 46.23 11.02 48.60 10.40 C49.50 10.16 50.40 10.27 51.30 10.00 C52.03 9.78 52.77 6.43 53.50 6.00 C54.53 5.40 55.57 5.42 56.60 5.10 C59.57 4.19 62.53 3.10 65.50 2.00 L65.50 43.10 L2.00 43.10 Z" fill="url(#g206)"/><path d="M2.00 39.80 C2.73 38.45 3.47 37.10 4.20 37.10 C5.37 37.10 6.53 37.10 7.70 37.10 C8.77 37.10 9.83 36.50 10.90 35.30 C11.47 34.66 12.03 29.24 12.60 28.70 C14.83 26.57 17.07 26.53 19.30 25.50 C21.97 24.28 24.63 23.55 27.30 22.00 C29.07 20.97 30.83 19.45 32.60 18.40 C35.57 16.64 38.53 15.92 41.50 14.40 C43.87 13.19 46.23 11.02 48.60 10.40 C49.50 10.16 50.40 10.27 51.30 10.00 C52.03 9.78 52.77 6.43 53.50 6.00 C54.53 5.40 55.57 5.42 56.60 5.10 C59.57 4.19 62.53 3.10 65.50 2.00" fill="none" stroke="#3584d2" stroke-width="2.00" stroke-linejoin="round" stroke-linecap="butt"/></svg>
<div class="t" style="right:539.00px;top:564.74px;font-size:9.17px;line-height:9.17px;color:#b4b4b4;">515.6K</div>
<div class="t" style="right:539.00px;top:599.04px;font-size:9.17px;line-height:9.17px;color:#b4b4b4;">493.8K</div>
<div class="t" style="left:688.70px;top:486.93px;font-size:10.83px;line-height:10.83px;color:#3c3c3c;">Trafic organique</div>
<div class="t" style="left:688.70px;top:505.99px;font-size:20.80px;line-height:20.80px;color:#2a2a2a;transform:scaleY(1.06);transform-origin:0 85%">2.5K</div>
<div class="t" style="left:738.50px;top:514.23px;font-size:10.83px;line-height:10.83px;color:#d2302f;">−376</div>
<div class="t" style="left:688.30px;top:532.16px;font-size:10.20px;line-height:10.20px;color:#7d7d7d;letter-spacing:-0.12px">Valeur: $1.1K</div>
<svg class="r" style="left:686.80px;top:565.90px;" width="68.00" height="43.10" viewBox="0 0 68.00 43.10"><defs><linearGradient id="g213" x1="0" y1="0" x2="0" y2="1"><stop offset="0" stop-color="rgb(241,138,28)" stop-opacity="0.25"/><stop offset="1" stop-color="rgb(241,138,28)" stop-opacity="0"/></linearGradient></defs><path d="M2.00 3.80 C2.73 8.00 3.47 12.20 4.20 12.20 C4.93 12.20 5.67 4.70 6.40 4.70 C7.43 4.70 8.47 10.00 9.50 10.00 C11.30 10.00 13.10 7.30 14.90 7.30 C15.63 7.30 16.37 7.30 17.10 7.30 C18.13 7.30 19.17 39.80 20.20 39.80 C20.93 39.80 21.67 39.03 22.40 37.50 C23.60 34.99 24.80 2.00 26.00 2.00 C26.87 2.00 27.73 17.10 28.60 17.10 C29.50 17.10 30.40 14.00 31.30 14.00 C32.50 14.00 33.70 31.80 34.90 31.80 C35.93 31.80 36.97 15.30 38.00 15.30 C39.17 15.30 40.33 22.77 41.50 22.90 C43.87 23.17 46.23 23.03 48.60 23.30 C49.93 23.45 51.27 25.50 52.60 25.50 C55.57 25.50 58.53 17.50 61.50 17.50 C63.00 17.50 64.50 21.10 66.00 24.70 L66.00 43.10 L2.00 43.10 Z" fill="url(#g213)"/><path d="M2.00 3.80 C2.73 8.00 3.47 12.20 4.20 12.20 C4.93 12.20 5.67 4.70 6.40 4.70 C7.43 4.70 8.47 10.00 9.50 10.00 C11.30 10.00 13.10 7.30 14.90 7.30 C15.63 7.30 16.37 7.30 17.10 7.30 C18.13 7.30 19.17 39.80 20.20 39.80 C20.93 39.80 21.67 39.03 22.40 37.50 C23.60 34.99 24.80 2.00 26.00 2.00 C26.87 2.00 27.73 17.10 28.60 17.10 C29.50 17.10 30.40 14.00 31.30 14.00 C32.50 14.00 33.70 31.80 34.90 31.80 C35.93 31.80 36.97 15.30 38.00 15.30 C39.17 15.30 40.33 22.77 41.50 22.90 C43.87 23.17 46.23 23.03 48.60 23.30 C49.93 23.45 51.27 25.50 52.60 25.50 C55.57 25.50 58.53 17.50 61.50 17.50 C63.00 17.50 64.50 21.10 66.00 24.70" fill="none" stroke="#f18a1c" stroke-width="2.00" stroke-linejoin="round" stroke-linecap="butt"/></svg>
<div class="t" style="right:412.00px;top:564.74px;font-size:9.17px;line-height:9.17px;color:#b4b4b4;">2.9K</div>
<div class="t" style="right:412.00px;top:599.04px;font-size:9.17px;line-height:9.17px;color:#b4b4b4;">2.3K</div>
<div class="t" style="left:816.00px;top:486.93px;font-size:10.83px;line-height:10.83px;color:#3c3c3c;">Mots clés organiques</div>
<div class="t" style="left:816.00px;top:505.99px;font-size:20.80px;line-height:20.80px;color:#2a2a2a;transform:scaleY(1.06);transform-origin:0 85%">2.8K</div>
<div class="t" style="left:865.00px;top:514.23px;font-size:10.83px;line-height:10.83px;color:#2d9a5a;">+255</div>
<svg class="r" style="left:814.20px;top:565.70px;" width="67.60" height="43.30" viewBox="0 0 67.60 43.30"><defs><linearGradient id="g219" x1="0" y1="0" x2="0" y2="1"><stop offset="0" stop-color="rgb(241,138,28)" stop-opacity="0.25"/><stop offset="1" stop-color="rgb(241,138,28)" stop-opacity="0"/></linearGradient></defs><path d="M2.00 39.80 C3.50 39.95 5.00 40.10 6.50 40.10 C7.67 40.10 8.83 38.00 10.00 38.00 C11.03 38.00 12.07 39.50 13.10 39.50 C14.43 39.50 15.77 38.51 17.10 37.70 C18.60 36.79 20.10 35.02 21.60 34.20 C22.77 33.56 23.93 33.65 25.10 32.90 C26.60 31.93 28.10 29.83 29.60 28.40 C31.07 27.00 32.53 26.07 34.00 24.40 C35.50 22.69 37.00 18.89 38.50 18.20 C39.37 17.80 40.23 17.60 41.10 17.60 C44.07 17.60 47.03 17.60 50.00 17.60 C51.20 17.60 52.40 14.31 53.60 12.90 C55.07 11.17 56.53 9.37 58.00 8.40 C59.20 7.61 60.40 7.97 61.60 7.10 C62.20 6.67 62.80 4.32 63.40 3.50 C64.13 2.50 64.87 2.25 65.60 2.00 L65.60 43.30 L2.00 43.30 Z" fill="url(#g219)"/><path d="M2.00 39.80 C3.50 39.95 5.00 40.10 6.50 40.10 C7.67 40.10 8.83 38.00 10.00 38.00 C11.03 38.00 12.07 39.50 13.10 39.50 C14.43 39.50 15.77 38.51 17.10 37.70 C18.60 36.79 20.10 35.02 21.60 34.20 C22.77 33.56 23.93 33.65 25.10 32.90 C26.60 31.93 28.10 29.83 29.60 28.40 C31.07 27.00 32.53 26.07 34.00 24.40 C35.50 22.69 37.00 18.89 38.50 18.20 C39.37 17.80 40.23 17.60 41.10 17.60 C44.07 17.60 47.03 17.60 50.00 17.60 C51.20 17.60 52.40 14.31 53.60 12.90 C55.07 11.17 56.53 9.37 58.00 8.40 C59.20 7.61 60.40 7.97 61.60 7.10 C62.20 6.67 62.80 4.32 63.40 3.50 C64.13 2.50 64.87 2.25 65.60 2.00" fill="none" stroke="#f18a1c" stroke-width="2.00" stroke-linejoin="round" stroke-linecap="butt"/></svg>
<div class="t" style="right:284.10px;top:564.74px;font-size:9.17px;line-height:9.17px;color:#b4b4b4;">2.8K</div>
<div class="t" style="right:284.10px;top:599.04px;font-size:9.17px;line-height:9.17px;color:#b4b4b4;">2.5K</div>
<div class="t" style="left:936.00px;top:507.13px;font-size:10.83px;line-height:10.83px;color:#3c3c3c;">FR</div>
<div class="t" style="right:181.30px;top:507.13px;font-size:10.83px;line-height:10.83px;color:#2e2e2e;">2.7K</div>
<div class="t" style="left:1023.80px;top:507.41px;font-size:10.50px;line-height:10.50px;color:#2d9a5a;">+233</div>
<div class="t" style="left:936.00px;top:525.29px;font-size:10.83px;line-height:10.83px;color:#3c3c3c;">US</div>
<div class="t" style="right:181.30px;top:525.29px;font-size:10.83px;line-height:10.83px;color:#2e2e2e;">117</div>
<div class="t" style="left:1023.80px;top:525.57px;font-size:10.50px;line-height:10.50px;color:#2d9a5a;">+11</div>
<div class="t" style="left:936.00px;top:543.45px;font-size:10.83px;line-height:10.83px;color:#3c3c3c;">MA</div>
<div class="t" style="right:181.30px;top:543.45px;font-size:10.83px;line-height:10.83px;color:#2e2e2e;">42</div>
<div class="t" style="left:1023.80px;top:543.73px;font-size:10.50px;line-height:10.50px;color:#2d9a5a;">+4</div>
<div class="t" style="left:936.00px;top:561.61px;font-size:10.83px;line-height:10.83px;color:#3c3c3c;">RU</div>
<div class="t" style="right:181.30px;top:561.61px;font-size:10.83px;line-height:10.83px;color:#2e2e2e;">30</div>
<div class="t" style="left:1023.80px;top:561.89px;font-size:10.50px;line-height:10.50px;color:#2d9a5a;">+3</div>
<div class="t" style="left:936.00px;top:579.77px;font-size:10.83px;line-height:10.83px;color:#3c3c3c;">AU</div>
<div class="t" style="right:181.30px;top:579.77px;font-size:10.83px;line-height:10.83px;color:#2e2e2e;">24</div>
<div class="t" style="left:1023.80px;top:580.05px;font-size:10.50px;line-height:10.50px;color:#2d9a5a;">+2</div>
<div class="t" style="left:936.00px;top:597.93px;font-size:10.83px;line-height:10.83px;color:#3c3c3c;">Autre</div>
<div class="t" style="right:181.30px;top:597.93px;font-size:10.83px;line-height:10.83px;color:#2e2e2e;">232</div>
<div class="t" style="left:1023.80px;top:598.21px;font-size:10.50px;line-height:10.50px;color:#2d9a5a;">+29</div>
<div class="t" style="left:1070.00px;top:486.93px;font-size:10.83px;line-height:10.83px;color:#3c3c3c;">Mots clés suivis</div>
<div class="r" style="left:1069.70px;top:504.20px;width:66.30px;height:21.20px;background:#fff;border:1px solid #cfd2d7;border-radius:3px;box-sizing:border-box"></div>
<div class="t" style="left:1102.85px;transform:translateX(-50%);top:509.12px;font-size:11.67px;line-height:11.67px;color:#2e2e2e;">Ajouter</div>
<div class="t" style="left:1070.00px;top:573.93px;font-size:10.00px;line-height:10.00px;color:#8a8a8a;letter-spacing:0.1px">Sélectionnez des</div>
<div class="t" style="left:1070.00px;top:585.53px;font-size:10.00px;line-height:10.00px;color:#8a8a8a;letter-spacing:0.1px">mots-clés pour suivre</div>
<div class="t" style="left:1070.00px;top:596.93px;font-size:10.00px;line-height:10.00px;color:#8a8a8a;letter-spacing:0.1px">leur classement</div>
<svg class="r" style="left:180.30px;top:625.80px;" width="10.00" height="10.00" viewBox="0 0 10.00 10.00"><path d="M5 0V10M0 5H10" stroke="#5a5a5a" stroke-width="1.5"/></svg>
<div class="t" style="left:197.70px;top:625.52px;font-size:11.67px;line-height:11.67px;color:#6a6a6a;">Ajouter des concurrents</div>
<div class="r" style="left:166.00px;top:664.40px;width:1017.50px;height:40.00px;background:#ffffff"></div>
<svg class="r" style="left:1150.20px;top:629.00px;" width="33.00" height="33.00" viewBox="0 0 33.00 33.00"><circle cx="16.5" cy="16.5" r="16.5" fill="#2d3b55"/><path d="M12.1 15.0 A4.6 4.6 0 1 1 20.0 18.0 C18.3 19.2 16.8 19.8 16.8 21.6" fill="none" stroke="#ffffff" stroke-width="1.9"/><circle cx="16.8" cy="23.7" r="1.2" fill="#ffffff"/></svg>
<svg class="r" style="left:1174.30px;top:619.30px;" width="13.40" height="13.40" viewBox="0 0 13.40 13.40"><circle cx="6.7" cy="6.7" r="6.7" fill="#ec3c3c"/><path d="M5.6 4.6L7.2 3.6V10" fill="none" stroke="#ffffff" stroke-width="1.3"/></svg>
</body></html>
